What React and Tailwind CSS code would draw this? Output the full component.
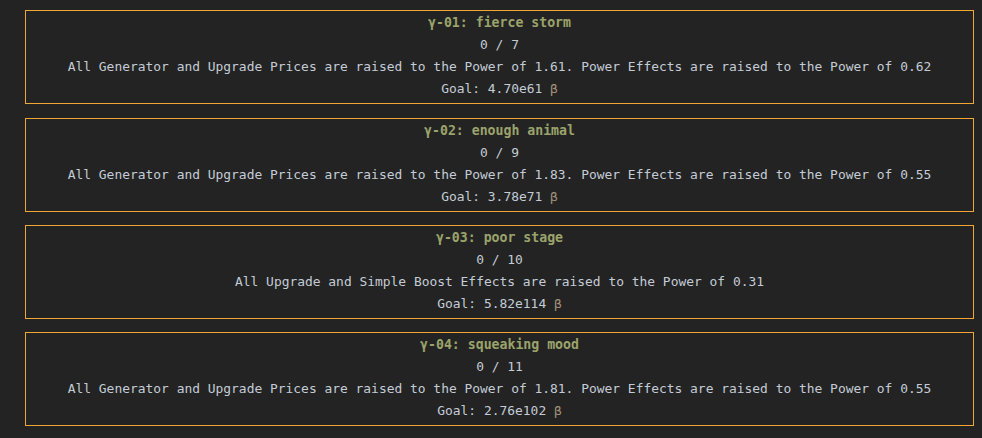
import React from "react";

const items = [
  { id: "γ-01", name: "fierce storm", count: "0 / 7", desc: "All Generator and Upgrade Prices are raised to the Power of 1.61. Power Effects are raised to the Power of 0.62", goal: "4.70e61", first: true },
  { id: "γ-02", name: "enough animal", count: "0 / 9", desc: "All Generator and Upgrade Prices are raised to the Power of 1.83. Power Effects are raised to the Power of 0.55", goal: "3.78e71" },
  { id: "γ-03", name: "poor stage", count: "0 / 10", desc: "All Upgrade and Simple Boost Effects are raised to the Power of 0.31", goal: "5.82e114" },
  { id: "γ-04", name: "squeaking mood", count: "0 / 11", desc: "All Generator and Upgrade Prices are raised to the Power of 1.81. Power Effects are raised to the Power of 0.55", goal: "2.76e102" },
];

export default function App() {
  return (
    <div className="w-[982px] h-[438px] bg-[#232323] overflow-hidden pt-[10px] pl-[25px] text-[12.93px] leading-[22px] text-[#c3ccd6] [font-family:'DejaVu_Sans_Mono','Liberation_Mono',monospace]">
      <div className="flex flex-col gap-[13px] w-[949px]">
        {items.map((it) => (
          <div key={it.id} className={"h-[94px] border border-[#f0a733] pt-[1px] text-center" + (it.first ? " mb-[1px]" : "")}>
            <div className="font-bold text-[13.2px] text-[#9ba36b]">{it.id}: {it.name}</div>
            <div>{it.count}</div>
            <div>{it.desc}</div>
            <div>
              Goal: {it.goal} <span className="text-[#a29279]">β</span>
            </div>
          </div>
        ))}
      </div>
    </div>
  );
}
